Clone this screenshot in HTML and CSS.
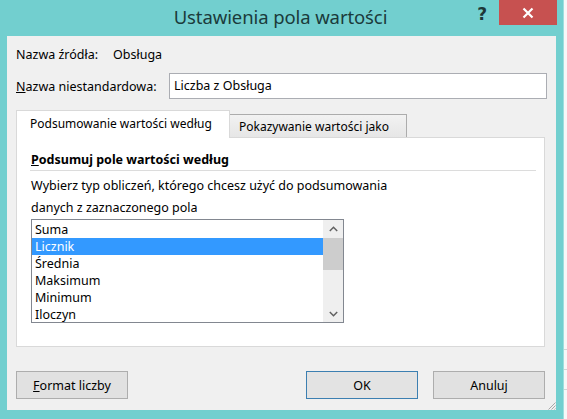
FILE: index.html
```html
<!DOCTYPE html>
<html lang="pl">
<head>
<meta charset="utf-8">
<title>Ustawienia pola wartości</title>
<link rel="stylesheet" href="styles.css">
</head>
<body>
<div class="screen">
  <div class="window">
    <div class="titlebar">
      <div class="tb-side"></div>
      <div class="title">Ustawienia pola wartości</div>
      <div class="tb-side controls">
        <span class="help">?</span>
        <span class="close">
          <svg width="12" height="12" viewBox="0 0 12 12"><path d="M1.5 1.5 L10.5 10.5 M10.5 1.5 L1.5 10.5" stroke="#fff" stroke-width="2.2" fill="none"/></svg>
        </span>
      </div>
    </div>
    <div class="panel">
      <div class="row src">
        <span class="src-label">Nazwa źródła:</span>
        <span class="src-value">Obsługa</span>
      </div>
      <div class="row custom">
        <span class="custom-label"><u>N</u>azwa niestandardowa:</span>
        <div class="input">Liczba z Obsługa</div>
      </div>
      <div class="tabs">
        <div class="tab active">Podsumowanie wartości według</div>
        <div class="tab">Pokazywanie wartości jako</div>
      </div>
      <div class="tabpanel">
        <div class="heading"><u>P</u>odsumuj pole wartości według</div>
        <div class="desc">Wybierz typ obliczeń, którego chcesz użyć do podsumowania<br>danych z zaznaczonego pola</div>
        <div class="listbox">
          <ul class="items">
            <li>Suma</li>
            <li class="selected">Licznik</li>
            <li>Średnia</li>
            <li>Maksimum</li>
            <li>Minimum</li>
            <li>Iloczyn</li>
          </ul>
          <div class="scrollbar">
            <span class="arrow">
              <svg width="9" height="6" viewBox="0 0 9 6"><path d="M0.8 5 L4.5 1.3 L8.2 5" stroke="#606060" stroke-width="1.5" fill="none"/></svg>
            </span>
            <div class="track"><div class="thumb"></div></div>
            <span class="arrow">
              <svg width="9" height="6" viewBox="0 0 9 6"><path d="M0.8 1 L4.5 4.7 L8.2 1" stroke="#606060" stroke-width="1.5" fill="none"/></svg>
            </span>
          </div>
        </div>
      </div>
      <div class="buttons">
        <button class="btn"><u>F</u>ormat liczby</button>
        <div class="spacer"></div>
        <button class="btn default">OK</button>
        <button class="btn">Anuluj</button>
      </div>
      <svg class="grip" width="9" height="9" viewBox="0 0 9 9">
        <path d="M8.5 1.5 L1.5 8.5 M8.5 4.5 L4.5 8.5 M8.5 7.5 L7.5 8.5" stroke="#a8a8a8" stroke-width="1" fill="none"/>
      </svg>
    </div>
  </div>
  <div class="sheet">
    <div class="sheet-cell"></div>
    <div class="sheet-cell"></div>
    <div class="sheet-cell"></div>
  </div>
</div>
</body>
</html>
```
FILE: styles.css
```css
* { box-sizing: border-box; }
html, body {
  margin: 0;
  padding: 0;
  width: 567px;
  height: 419px;
  overflow: hidden;
  background: #f7f7f7;
}
body {
  font-family: "Noto Sans", "Open Sans", "DejaVu Sans", sans-serif;
  font-size: 12.5px;
  color: #000;
}
.screen {
  display: flex;
  width: 567px;
  height: 419px;
}
.window {
  width: 563px;
  height: 419px;
  background: #72cfcf;
  display: flex;
  flex-direction: column;
}
.titlebar {
  height: 36px;
  display: grid;
  grid-template-columns: 1fr auto 1fr;
  padding-right: 6px;
}
.title {
  font-size: 18.5px;
  color: #1b3b3b;
  line-height: 34px;
  letter-spacing: -0.1px;
  padding-left: 4px;
}
.controls {
  display: flex;
  justify-content: flex-end;
  align-items: flex-start;
}
.help {
  font-family: "DejaVu Sans", sans-serif;
  font-weight: bold;
  font-size: 17px;
  color: #1d3737;
  line-height: 26px;
  margin-right: 12px;
  margin-top: 1px;
}
.close {
  width: 58px;
  height: 25px;
  background: #c75150;
  display: flex;
  align-items: center;
  justify-content: center;
}
.panel {
  position: relative;
  flex: 1;
  margin: 0 7px 9px 7px;
  background: #f0f0f0;
  padding: 9px 9px 0 9px;
  display: flex;
  flex-direction: column;
}
.row {
  display: flex;
  align-items: center;
}
.src { height: 18px; }
.src-label { width: 97px; }
.custom {
  margin-top: 10px;
  height: 26px;
}
.custom-label { width: 153px; }
.input {
  flex: 1;
  height: 26px;
  background: #fff;
  border: 1px solid #abadb3;
  padding: 0 4px;
  line-height: 24px;
}
.tabs {
  margin-top: 11px;
  height: 27px;
  display: flex;
  align-items: flex-end;
  position: relative;
  z-index: 1;
}
.tab {
  height: 23px;
  width: 177px;
  border: 1px solid #acacac;
  border-bottom: none;
  background: linear-gradient(#f2f2f2, #e6e6e6);
  padding-left: 9px;
  line-height: 23px;
  white-space: nowrap;
  font-size: 12px;
}
.tab.active {
  width: 214px;
  height: 28px;
  margin-bottom: -1px;
  background: #fff;
  border-color: #d9d9d9;
  padding-left: 13px;
  line-height: 26px;
}
.tab.active + .tab { border-left: none; }
.tabpanel {
  height: 210px;
  margin-right: 2px;
  background: #fff;
  border: 1px solid #d9d9d9;
  padding: 13px 8px 0 13px;
}
.heading {
  font-weight: bold;
  line-height: 18px;
  height: 20px;
  border-bottom: 1px solid #dcdcdc;
  padding-left: 1px;
}
.desc {
  margin-top: 4px;
  line-height: 22px;
  padding-left: 1px;
}
.listbox {
  width: 313px;
  height: 104px;
  margin-left: 1px;
  border: 1px solid #828790;
  display: flex;
}
.items {
  list-style: none;
  margin: 0;
  padding: 1px 0 0 0;
  flex: 1;
}
.items li {
  height: 17px;
  line-height: 17px;
  padding-left: 3px;
}
.items li.selected {
  background: #3399ff;
  color: #fff;
}
.scrollbar {
  width: 20px;
  background: #efefef;
  display: flex;
  flex-direction: column;
}
.arrow {
  height: 17px;
  display: flex;
  align-items: center;
  justify-content: center;
}
.track {
  flex: 1;
  padding-top: 1px;
}
.thumb {
  height: 32px;
  background: #cdcdcd;
}
.buttons {
  margin-top: 24px;
  margin-right: 2px;
  display: flex;
  gap: 15px;
}
.spacer { flex: 1; }
.btn {
  width: 112px;
  height: 28px;
  background: #e1e1e1;
  border: 1px solid #adadad;
  font-family: inherit;
  font-size: 12.5px;
  color: #000;
  padding: 0;
}
.btn.default {
  border-color: #3c7fb1;
  background: #e3e3e3;
}
.grip {
  position: absolute;
  right: 0;
  bottom: 0;
}
.sheet {
  flex: 1;
  display: flex;
  flex-direction: column;
  border-left: 1px solid #9fdede;
  padding-top: 330px;
}
.sheet-cell {
  height: 20px;
  border-bottom: 1px solid #d4d4d4;
}
```
